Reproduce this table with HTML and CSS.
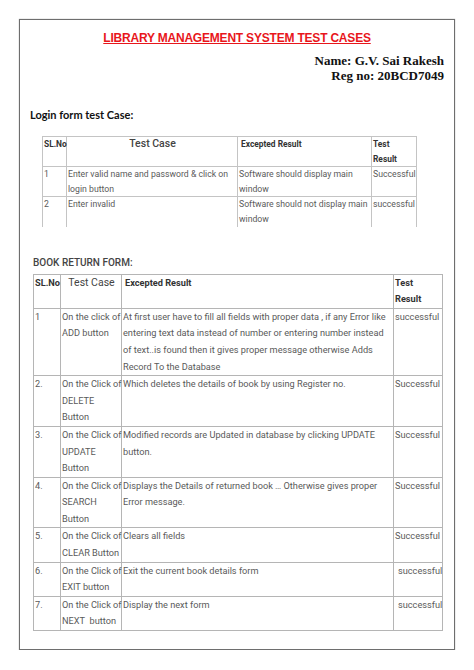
FILE: index.html
```html
<!DOCTYPE html>
<html>
<head>
<meta charset="utf-8">
<link rel="stylesheet" href="styles.css">
</head>
<body>
<div class="page">
  <h1 class="title">LIBRARY MANAGEMENT SYSTEM TEST CASES</h1>
  <div class="author">
    <div>Name: G.V. Sai Rakesh</div>
    <div>Reg no: 20BCD7049</div>
  </div>
  <h2 class="login-head">Login form test Case:</h2>
  <table class="t1">
    <colgroup><col class="c1a"><col class="c1b"><col class="c1c"><col class="c1d"></colgroup>
    <tr class="hd">
      <td class="b">SL.No</td>
      <td class="tc">Test Case</td>
      <td class="b pl">Excepted Result</td>
      <td class="b">Test<br>Result</td>
    </tr>
    <tr>
      <td>1</td>
      <td>Enter valid name and password &amp; click on<br>login button</td>
      <td>Software should display main<br>window</td>
      <td>Successful</td>
    </tr>
    <tr class="last">
      <td>2</td>
      <td>Enter invalid</td>
      <td>Software should not display main<br>window</td>
      <td>successful</td>
    </tr>
  </table>
  <h2 class="book-head">BOOK RETURN FORM:</h2>
  <table class="t2">
    <colgroup><col class="c2a"><col class="c2b"><col class="c2c"><col class="c2d"></colgroup>
    <tr class="hd">
      <td class="b">SL.No</td>
      <td class="tc">Test Case</td>
      <td class="b pl">Excepted Result</td>
      <td class="b">Test<br>Result</td>
    </tr>
    <tr>
      <td>1</td>
      <td>On the click of<br>ADD button</td>
      <td>At first user have to fill all fields with proper data , if any Error like<br>entering text data instead of number or entering number instead<br>of text..is found then it gives proper message otherwise Adds<br>Record To the Database</td>
      <td>successful</td>
    </tr>
    <tr>
      <td>2.</td>
      <td>On the Click of<br>DELETE<br>Button</td>
      <td>Which deletes the details of book by using Register no.</td>
      <td>Successful</td>
    </tr>
    <tr>
      <td>3.</td>
      <td>On the Click of<br>UPDATE<br>Button</td>
      <td>Modified records are Updated in database by clicking UPDATE<br>button.</td>
      <td>Successful</td>
    </tr>
    <tr>
      <td>4.</td>
      <td>On the Click of<br>SEARCH<br>Button</td>
      <td>Displays the Details of returned book … Otherwise gives proper<br>Error message.</td>
      <td>Successful</td>
    </tr>
    <tr>
      <td>5.</td>
      <td>On the Click of<br>CLEAR Button</td>
      <td>Clears all fields</td>
      <td>Successful</td>
    </tr>
    <tr>
      <td>6.</td>
      <td>On the Click of<br>EXIT button</td>
      <td>Exit the current book details form</td>
      <td class="ind">successful</td>
    </tr>
    <tr>
      <td>7.</td>
      <td>On the Click of<br>NEXT&nbsp; button</td>
      <td>Display the next form</td>
      <td class="ind">successful</td>
    </tr>
  </table>
</div>
</body>
</html>
```

FILE: styles.css
```css
html, body {
  margin: 0;
  padding: 0;
  background: #fff;
}
.page {
  margin: 19px 0 0 19px;
  width: 434px;
  height: 629px;
  border: 1px solid #6e6e6e;
  box-shadow: 0 0 1px #999;
}
.title {
  margin: 10px 0 0 0;
  text-align: center;
  font-family: "Liberation Sans", sans-serif;
  font-weight: bold;
  font-size: 12px;
  line-height: 16px;
  color: #e8161b;
  text-decoration: underline;
  letter-spacing: -0.2px;
}
.author {
  margin: 7px 10px 0 0;
  text-align: right;
  font-family: "Liberation Serif", serif;
  font-weight: bold;
  font-size: 13px;
  line-height: 15px;
  color: #111;
}
.login-head {
  margin: 25px 0 0 10px;
  font-family: Lato, sans-serif;
  font-weight: bold;
  font-size: 11px;
  line-height: 14px;
  color: #111;
}
table {
  border-collapse: collapse;
  font-family: Roboto, sans-serif;
  color: #5a5a5a;
  table-layout: fixed;
}
td {
  border: 1px solid #c4c4c4;
  vertical-align: top;
  padding: 0 0 0 1px;
  white-space: nowrap;
  overflow: visible;
}
td.b {
  font-weight: bold;
  color: #333;
}
td.pl {
  padding-left: 3px;
}
td.tc {
  text-align: center;
  font-size: 10.5px;
  color: #444;
}
.t1 {
  margin: 14px 0 0 22px;
  width: 374px;
  font-size: 8.7px;
}
.t1 td {
  line-height: 14.6px;
}
.t1 td.b {
  font-size: 8.4px;
}
.t1 td.tc {
  font-weight: 500;
}
.t1 tr.last td {
  border-bottom: none;
}
.c1a { width: 24px; }
.c1b { width: 171px; }
.c1c { width: 134px; }
.c1d { width: 45px; }
.book-head {
  margin: 29px 0 0 13px;
  font-family: Roboto, sans-serif;
  font-weight: 500;
  font-size: 10px;
  line-height: 14px;
  color: #444;
}
.t2 {
  margin: 4px 0 0 13px;
  width: 409px;
  font-size: 9.2px;
  border: 1px solid #888;
}
.t2 td {
  line-height: 16.6px;
  border-color: #b5b5b5;
}
.c2a { width: 27px; }
.c2b { width: 61px; }
.c2c { width: 272px; }
.c2d { width: 49px; }
td.ind {
  padding-left: 4px;
}
```
